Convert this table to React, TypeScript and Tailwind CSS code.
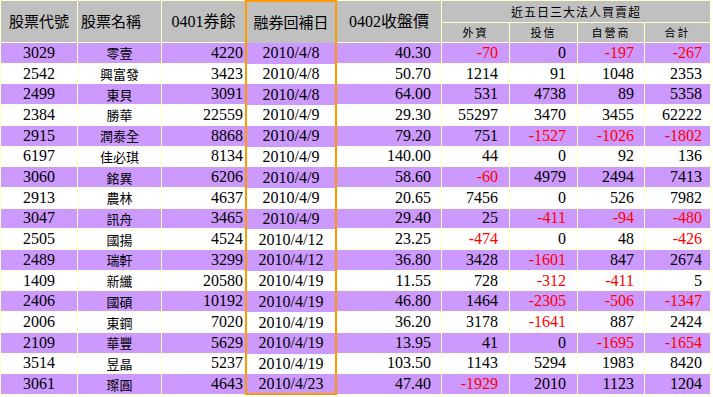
import React from "react";

type Row = [string, string, string, string, string, number, number, number, number];

const rows: Row[] = [
  ["3029", "零壹", "4220", "2010/4/8", "40.30", -70, 0, -197, -267],
  ["2542", "興富發", "3423", "2010/4/8", "50.70", 1214, 91, 1048, 2353],
  ["2499", "東貝", "3091", "2010/4/8", "64.00", 531, 4738, 89, 5358],
  ["2384", "勝華", "22559", "2010/4/9", "29.30", 55297, 3470, 3455, 62222],
  ["2915", "潤泰全", "8868", "2010/4/9", "79.20", 751, -1527, -1026, -1802],
  ["6197", "佳必琪", "8134", "2010/4/9", "140.00", 44, 0, 92, 136],
  ["3060", "銘異", "6206", "2010/4/9", "58.60", -60, 4979, 2494, 7413],
  ["2913", "農林", "4637", "2010/4/9", "20.65", 7456, 0, 526, 7982],
  ["3047", "訊舟", "3465", "2010/4/9", "29.40", 25, -411, -94, -480],
  ["2505", "國揚", "4524", "2010/4/12", "23.25", -474, 0, 48, -426],
  ["2489", "瑞軒", "3299", "2010/4/12", "36.80", 3428, -1601, 847, 2674],
  ["1409", "新纖", "20580", "2010/4/19", "11.55", 728, -312, -411, 5],
  ["2406", "國碩", "10192", "2010/4/19", "46.80", 1464, -2305, -506, -1347],
  ["2006", "東鋼", "7020", "2010/4/19", "36.20", 3178, -1641, 887, 2424],
  ["2109", "華豐", "5629", "2010/4/19", "13.95", 41, 0, -1695, -1654],
  ["3514", "昱晶", "5237", "2010/4/19", "103.50", 1143, 5294, 1983, 8420],
  ["3061", "璨圓", "4643", "2010/4/23", "47.40", -1929, 2010, 1123, 1204],
];

const num = (v: number, pr: string, bg: string) => (
  <div
    className={`${bg} ${pr} flex items-center justify-end text-[16px] leading-none ${
      v < 0 ? "text-[#FF0000]" : "text-black"
    }`}
  >
    {v}
  </div>
);

export default function App() {
  return (
    <div className="bg-white w-[713px] h-[397px] font-['Liberation_Serif','Noto_Sans_CJK_TC',serif] text-black">
      <div className="grid w-[711px] h-[395px] gap-px p-px bg-[#FFFFCC] grid-cols-[76px_83px_83px_90px_104px_67px_67px_66px_65px] grid-rows-[21px_19px_repeat(17,minmax(0,1fr))]">
        <div className="row-span-2 bg-[#C0C0C0] flex items-center justify-center text-[15px] font-['Noto_Sans_CJK_TC',sans-serif]">
          股票代號
        </div>
        <div className="row-span-2 bg-[#C0C0C0] flex items-center justify-start pl-[3px] text-[15px] font-['Noto_Sans_CJK_TC',sans-serif]">
          股票名稱
        </div>
        <div className="row-span-2 bg-[#C0C0C0] flex items-center justify-center text-[16px]">
          0401券餘
        </div>
        <div className="row-span-2 -mx-px -mt-px -mb-px border-x-2 border-t-2 border-[#FF9900] bg-[#C0C0C0] flex items-center justify-center text-[15px] font-['Noto_Sans_CJK_TC',sans-serif]">
          融券回補日
        </div>
        <div className="row-span-2 bg-[#C0C0C0] flex items-center justify-center text-[16px]">
          0402收盤價
        </div>
        <div className="col-span-4 bg-[#C0C0C0] flex items-center justify-center text-[12px] tracking-[1px] font-['Noto_Sans_CJK_TC',sans-serif]">
          近五日三大法人買賣超
        </div>
        {["外資", "投信", "自營商", "合計"].map((h) => (
          <div
            key={h}
            className="bg-[#C0C0C0] flex items-center justify-center text-[11px] tracking-[2px] font-['Noto_Sans_CJK_TC',sans-serif]"
          >
            {h}
          </div>
        ))}
        {rows.map((r, i) => {
          const bg = i % 2 === 0 ? "bg-[#CC99FF]" : "bg-white";
          const last = i === rows.length - 1;
          return (
            <React.Fragment key={r[0]}>
              <div className={`${bg} flex items-center justify-center text-[16px] leading-none`}>{r[0]}</div>
              <div className={`${bg} flex items-center justify-center text-[13px] leading-none font-['Noto_Sans_CJK_TC',sans-serif]`}>
                {r[1]}
              </div>
              <div className={`${bg} flex items-center justify-end pr-[2px] text-[16px] leading-none`}>{r[2]}</div>
              <div
                className={`${bg} -mx-px ${last ? "-mb-px border-b-2" : "-mb-px"} border-x-2 border-[#FF9900] flex items-center justify-center text-[16px] leading-none`}
              >
                {r[3]}
              </div>
              <div className={`${bg} flex items-center justify-end pr-[10px] text-[16px] leading-none`}>{r[4]}</div>
              {num(r[5], "pr-[11px]", bg)}
              {num(r[6], "pr-[11px]", bg)}
              {num(r[7], "pr-[10px]", bg)}
              {num(r[8], "pr-[8px]", bg)}
            </React.Fragment>
          );
        })}
      </div>
    </div>
  );
}
